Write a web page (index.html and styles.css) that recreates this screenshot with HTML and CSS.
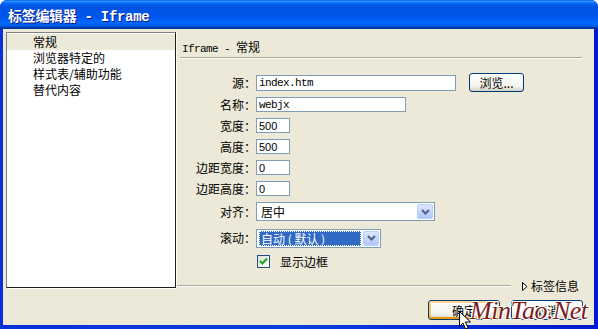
FILE: index.html
```html
<!DOCTYPE html>
<html lang="zh-CN">
<head>
    <meta charset="UTF-8">
    <title>标签编辑器 - Iframe</title>
    <link rel="stylesheet" href="styles.css">
</head>
<body>

<div class="window">
    <div class="titlebar">
        <span class="title">标签编辑器 - Iframe</span>
    </div>

    <div class="frame">
        <div class="client">
            <div class="top">
                <ul class="tree">
                    <li class="selected">常规</li>
                    <li>浏览器特定的</li>
                    <li>样式表/辅助功能</li>
                    <li>替代内容</li>
                </ul>

                <div class="panel">
                    <div class="panel-title"><span class="mono">Iframe - </span>常规</div>

                    <div class="form">
                        <div class="row row-src">
                            <label>源：</label>
                            <input class="field field-mono w-src" type="text" value="index.htm">
                            <button class="btn btn-browse">浏览...</button>
                        </div>
                        <div class="row">
                            <label>名称：</label>
                            <input class="field field-mono w-name" type="text" value="webjx">
                        </div>
                        <div class="row">
                            <label>宽度：</label>
                            <input class="field w-num" type="text" value="500">
                        </div>
                        <div class="row">
                            <label>高度：</label>
                            <input class="field w-num" type="text" value="500">
                        </div>
                        <div class="row">
                            <label>边距宽度：</label>
                            <input class="field w-num" type="text" value="0">
                        </div>
                        <div class="row">
                            <label>边距高度：</label>
                            <input class="field w-num" type="text" value="0">
                        </div>
                        <div class="row row-align">
                            <label>对齐：</label>
                            <div class="combo w-align">
                                <span class="combo-value">居中</span>
                                <span class="combo-drop">
                                    <svg width="9" height="6" viewBox="0 0 9 6"><path d="M1 1l3.5 3.5L8 1" fill="none" stroke="#4d6185" stroke-width="2"/></svg>
                                </span>
                            </div>
                        </div>
                        <div class="row row-scroll">
                            <label>滚动：</label>
                            <div class="combo w-scroll">
                                <span class="combo-value focused">自动 ( 默认 )</span>
                                <span class="combo-drop">
                                    <svg width="9" height="6" viewBox="0 0 9 6"><path d="M1 1l3.5 3.5L8 1" fill="none" stroke="#4d6185" stroke-width="2"/></svg>
                                </span>
                            </div>
                        </div>
                        <div class="row row-check">
                            <span></span>
                            <div class="check-line">
                                <span class="checkbox">
                                    <svg width="9" height="9" viewBox="0 0 9 9"><path d="M1 4l2.5 2.5L8 1.5" fill="none" stroke="#21a121" stroke-width="2"/></svg>
                                </span>
                                显示边框
                            </div>
                        </div>
                    </div>

                    <div class="panel-foot">
                        <span class="rule"></span>
                        <span class="tag-info">
                            <svg width="6" height="9" viewBox="0 0 6 9"><path d="M0.5 0.5L5 4.5L0.5 8.5Z" fill="#fff" stroke="#000"/></svg>标签信息
                        </span>
                    </div>
                </div>
            </div>

            <div class="actions">
                <button class="btn btn-default">确定</button>
                <button class="btn">取消</button>
            </div>
        </div>
    </div>

    <!-- watermark and mouse pointer lie over the buttons -->
    <div class="watermark">MinTao.Net</div>
    <svg class="pointer" width="12" height="19" viewBox="0 0 12 19">
        <path d="M0.5 0.5V15.5L4 12L6.5 18L9 17L6.5 11H11.5Z" fill="#fff" stroke="#000"/>
    </svg>
</div>

</body>
</html>
```

FILE: styles.css
```css
body {
    margin: 0;
    padding: 0;
    background-color: #ffffff;
    font-family: "Liberation Sans", "Noto Sans CJK SC", sans-serif;
    font-size: 12px;
    color: #000000;
}

.window {
    position: relative;
    width: 598px;
    height: 329px;
    display: flex;
    flex-direction: column;
    background-color: #0831d9;
    border-radius: 7px 7px 0 0;
    overflow: hidden;
}

.titlebar {
    height: 29px;
    display: flex;
    align-items: center;
    padding-left: 8px;
    background: linear-gradient(to bottom, #0058ee 0%, #3593ff 4%, #288eff 6%, #127dff 8%, #036ffc 10%, #0262ee 14%, #0057e5 20%, #0054e3 24%, #0055eb 56%, #005bf5 66%, #026afe 76%, #0062ef 86%, #0052d6 92%, #0040ab 94%, #003092 100%);
}

.title {
    font-family: "Liberation Mono", "Noto Sans CJK SC", monospace;
    font-size: 14px;
    font-weight: bold;
    color: #ffffff;
    letter-spacing: -0.3px;
    text-shadow: 1px 1px 0 #0a1883;
}

.frame {
    flex: 1;
    display: flex;
    padding: 0 4px 4px 3px;
    background: linear-gradient(to right, #0831d9, #0a3ee0 50%, #0019cf);
}

.client {
    flex: 1;
    display: flex;
    flex-direction: column;
    background-color: #ece9d8;
    padding: 3px 11px 0 3px;
}

.top {
    display: flex;
    height: 261px;
}

/* left category list */
.tree {
    list-style: none;
    margin: 0;
    padding: 1px 0 0 0;
    width: 168px;
    height: 253px;
    background-color: #ffffff;
    border: 1px solid #1e1e1e;
    border-top-color: #808080;
    border-left-color: #808080;
    box-shadow: 1px 1px 0 #ffffff;
    font-family: "Noto Sans CJK SC", sans-serif;
}

.tree li {
    height: 16px;
    line-height: 16px;
    padding-left: 26px;
}

.tree li.selected {
    background-color: #ece9d8;
}

/* right side */
.panel {
    flex: 1;
    display: flex;
    flex-direction: column;
    padding-left: 4px;
}

.panel-title {
    padding: 8px 0 3px 2px;
    height: 14px;
    line-height: 14px;
    border-bottom: 1px solid #aca899;
    box-shadow: 0 1px 0 #ffffff;
    margin-right: 1px;
    font-family: "Noto Sans CJK SC", sans-serif;
}

.mono {
    font-family: "Liberation Mono", monospace;
    font-size: 11px;
    letter-spacing: -0.6px;
}

.form {
    margin-top: 13px;
    display: flex;
    flex-direction: column;
}

.row {
    display: grid;
    grid-template-columns: 76px auto 1fr;
    align-items: center;
    height: 21px;
}

.row label {
    text-align: right;
    font-family: "Noto Sans CJK SC", sans-serif;
    line-height: 14px;
}

.row-src { height: 23px; }
.row-align { height: 25px; }
.row-scroll { height: 28px; }
.row-check { height: 18px; }

.field {
    box-sizing: border-box;
    height: 15px;
    margin: 0;
    padding: 0 2px;
    border: 1px solid #7f9db9;
    background-color: #ffffff;
    font-family: "Liberation Sans", sans-serif;
    font-size: 11px;
    color: #000000;
    outline: none;
}

.field-mono {
    font-family: "Liberation Mono", monospace;
    letter-spacing: -0.6px;
}

.w-src { width: 200px; height: 16px; }
.w-name { width: 150px; }
.w-num { width: 34px; }

.btn {
    box-sizing: border-box;
    height: 19px;
    padding: 0;
    border: 1px solid #003c74;
    border-radius: 3px;
    background: linear-gradient(to bottom, #ffffff, #f4f3ee 70%, #d6d0c5);
    font-family: "Noto Sans CJK SC", sans-serif;
    font-size: 12px;
    line-height: 15px;
    color: #000000;
}

.btn-browse {
    justify-self: start;
    margin-left: 13px;
    width: 55px;
}

/* dropdowns */
.combo {
    box-sizing: border-box;
    height: 19px;
    display: flex;
    align-items: center;
    border: 1px solid #7f9db9;
    background-color: #ffffff;
    padding: 1px;
    font-family: "Noto Sans CJK SC", sans-serif;
}

.w-align { width: 179px; }
.w-scroll { width: 125px; }

.combo-value {
    flex: 1;
    height: 15px;
    line-height: 15px;
    padding-left: 3px;
}

.combo-value.focused {
    margin-right: 2px;
    margin-left: 1px;
    padding-left: 2px;
    background-color: #316ac5;
    color: #ffffff;
    outline: 1px dotted #ffffff;
    outline-offset: -1px;
}

.combo-drop {
    box-sizing: border-box;
    width: 16px;
    height: 15px;
    display: flex;
    align-items: center;
    justify-content: center;
    border: 1px solid #b9d1fa;
    border-radius: 2px;
    background: linear-gradient(to bottom, #dce6fd, #c1d3fb 60%, #b0c6f6);
}

.check-line {
    display: flex;
    align-items: center;
    gap: 10px;
    padding-left: 1px;
    font-family: "Noto Sans CJK SC", sans-serif;
}

.checkbox {
    box-sizing: border-box;
    width: 13px;
    height: 13px;
    display: flex;
    align-items: center;
    justify-content: center;
    border: 1px solid #1c5180;
    background: linear-gradient(135deg, #dcdcd7, #ffffff);
}

.panel-foot {
    margin-top: auto;
    height: 14px;
    display: flex;
    align-items: center;
    gap: 11px;
    margin-left: -3px;
    padding-right: 4px;
}

.rule {
    flex: 1;
    border-top: 1px solid #aca899;
    border-bottom: 1px solid #ffffff;
}

.tag-info {
    display: flex;
    align-items: center;
    gap: 3px;
    font-family: "Noto Sans CJK SC", sans-serif;
    line-height: 14px;
}

.actions {
    display: flex;
    justify-content: flex-end;
    gap: 11px;
    margin-top: 7px;
}

.actions .btn {
    width: 72px;
    height: 20px;
}

.btn-default {
    box-shadow: inset 0 -2px 0 #e5970a, inset 0 2px 0 #ffd68c, inset 2px 0 0 #fbc35e, inset -2px 0 0 #fbc35e;
}

.watermark {
    position: absolute;
    left: 470px;
    top: 296px;
    font-family: "Liberation Serif", serif;
    font-style: italic;
    font-size: 26px;
    color: #7a1c1c;
    letter-spacing: -0.5px;
    text-shadow: 1px 1px 0 #ffffff, -1px -1px 0 #ffffff, 1px -1px 0 #ffffff, -1px 1px 0 #ffffff;
}

.pointer {
    position: absolute;
    left: 459px;
    top: 311px;
}
```
